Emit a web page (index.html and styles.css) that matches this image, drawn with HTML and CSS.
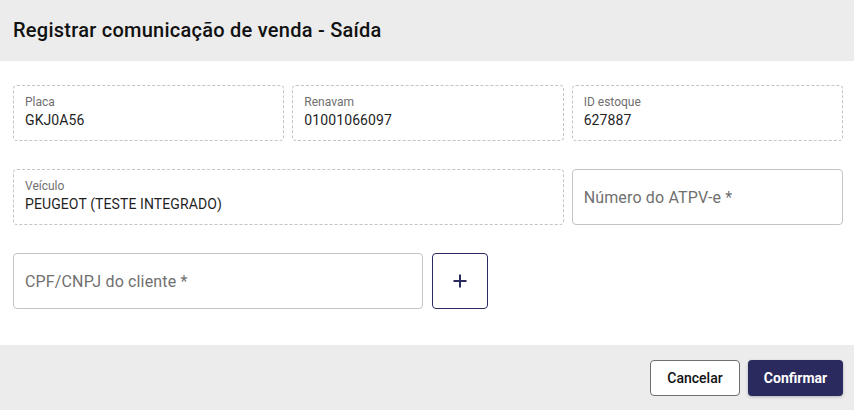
FILE: index.html
```html
<!DOCTYPE html>
<html lang="pt-BR">
<head>
<meta charset="utf-8">
<link rel="stylesheet" href="styles.css">
</head>
<body>
<div class="dialog">
  <div class="header"><h1 class="title">Registrar comunicação de venda - Saída</h1></div>
  <div class="content">
    <div class="grid">
      <div class="field readonly"><span class="label">Placa</span><span class="value">GKJ0A56</span></div>
      <div class="field readonly"><span class="label">Renavam</span><span class="value">01001066097</span></div>
      <div class="field readonly"><span class="label">ID estoque</span><span class="value">627887</span></div>
      <div class="field readonly span2"><span class="label">Veículo</span><span class="value">PEUGEOT (TESTE INTEGRADO)</span></div>
      <div class="field input"><span class="placeholder">Número do ATPV-e *</span></div>
    </div>
    <div class="row">
      <div class="field input cpf"><span class="placeholder">CPF/CNPJ do cliente *</span></div>
      <button class="add-btn" type="button" aria-label="Adicionar">
        <svg width="16" height="16" viewBox="0 0 16 16"><path d="M8 1.5v13M1.5 8h13" stroke="#2b2a5e" stroke-width="2" fill="none"/></svg>
      </button>
    </div>
  </div>
  <div class="footer">
    <button class="btn btn-cancel" type="button">Cancelar</button>
    <button class="btn btn-confirm" type="button">Confirmar</button>
  </div>
</div>
</body>
</html>
```
FILE: styles.css
```css
* { box-sizing: border-box; }
html, body { margin: 0; padding: 0; background: #ffffff; }
body { font-family: Roboto, "Liberation Sans", sans-serif; color: #1f1f1f; }
.dialog { width: 854px; height: 410px; display: flex; flex-direction: column; }
.header { height: 61px; background: #ececec; display: flex; align-items: center; padding: 0 13px 2px; }
.title { margin: 0; font-size: 20px; line-height: 24px; font-weight: 500; color: #111; letter-spacing: 0.25px; }
.content { padding: 24px 11px 0 13px; height: 284px; }
.grid { display: grid; grid-template-columns: 1fr 1fr 1fr; column-gap: 8px; row-gap: 28px; }
.span2 { grid-column: span 2; }
.field { height: 56px; border-radius: 4px; }
.readonly { border: 1px dashed #c4c4c4; padding: 8px 11px 0; display: flex; flex-direction: column; }
.label { font-size: 12px; line-height: 16px; color: #6f6f6f; }
.value { font-size: 14px; line-height: 20px; color: #1f1f1f; letter-spacing: 0.1px; }
.input { border: 1px solid #c4c4c4; padding: 0 11px; display: flex; align-items: center; }
.placeholder { font-size: 16px; color: #707070; letter-spacing: 0.15px; }
.row { display: flex; gap: 9px; margin-top: 28px; }
.cpf { width: 410px; }
.add-btn { width: 56px; height: 56px; border: 1px solid #2b2a5e; border-radius: 4px; background: #fff; display: flex; align-items: center; justify-content: center; padding: 0; }
.footer { flex: 1; background: #ececec; display: flex; justify-content: flex-end; align-items: center; gap: 8px; padding: 0 11px 0 0; }
.btn { height: 36px; border-radius: 4px; font-family: Roboto, "Liberation Sans", sans-serif; font-size: 14px; font-weight: 500; padding: 0; }
.btn-cancel { width: 90px; background: #fff; border: 1px solid #6f6f6f; color: #111; }
.btn-confirm { width: 95px; background: #2b2a5e; border: none; color: #fff; font-weight: 700; box-shadow: 0 1px 3px rgba(0,0,0,0.25); }
```
